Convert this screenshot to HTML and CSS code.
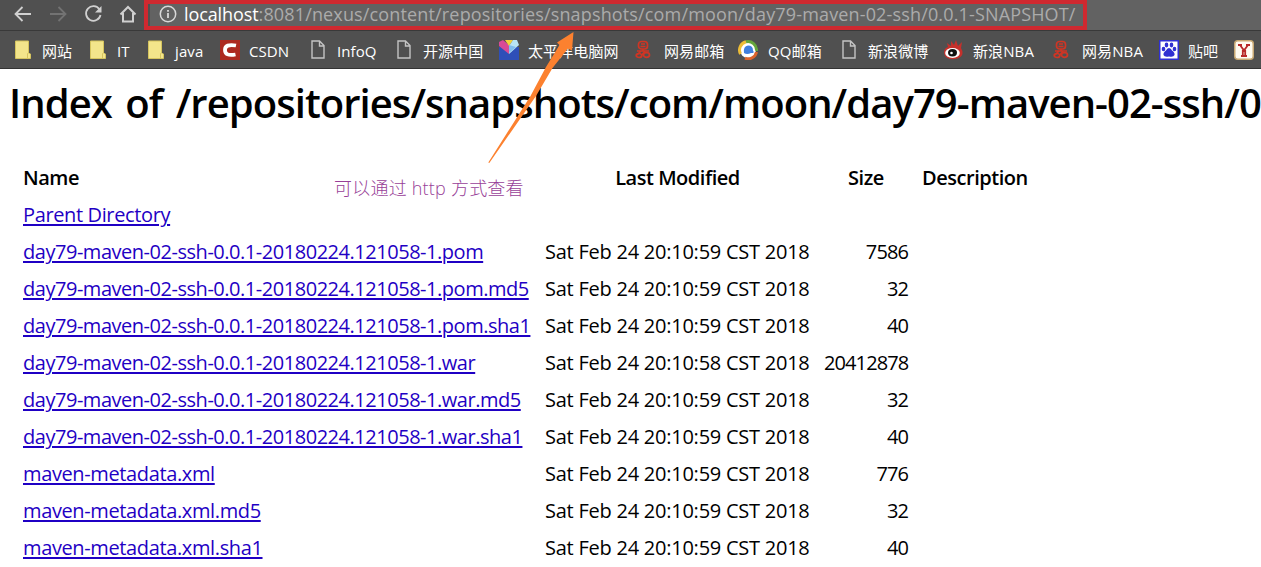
FILE: index.html
```html
<!DOCTYPE html>
<html lang="zh-CN">
<head>
<meta charset="utf-8">
<title>Index of /repositories/snapshots</title>
<link rel="stylesheet" href="styles.css">
</head>
<body>
<svg class="defs" width="0" height="0" aria-hidden="true">
  <symbol id="folder" viewBox="0 0 16 19"><path d="M.5 1h13v12l2 1v4.500H.5z" fill="#f3e58b" stroke="#d5c45e"/><path d="M12.500 18v-4.500l1-1" fill="none" stroke="#d5c45e"/></symbol>
  <symbol id="page" viewBox="0 0 14 19"><path d="M1 1h7.500L13 5.500V18H1zM8.500 1v5H13" fill="none" stroke="#c4c4c4" stroke-width="1.400"/></symbol>
  <symbol id="netease" viewBox="0 0 16 19"><g fill="none" stroke="#cf3524" stroke-width="1.700"><rect x="3.500" y="1.500" width="9" height="7.500" rx="3"/><path d="M6 4h4M5.500 6.500h5M8 9v2M2 11h12M6 11l-4 4M10 11l-3 4"/><ellipse cx="4" cy="15.500" rx="2.800" ry="2"/><ellipse cx="11.500" cy="15" rx="3" ry="2.300"/></g></symbol>
</svg>
<header class="chrome">
  <div class="toolbar">
    <svg class="nav" viewBox="0 0 140 30" width="140" height="30" fill="none" stroke="#d0d0d0" stroke-width="1.800">
      <path d="M31 14H16M22.500 7l-7 7 7 7"/>
      <path d="M50 14h15M58.500 7l7 7-7 7" stroke="#737373"/>
      <path d="M99.500 9.500A7.300 7.300 0 1 0 100.500 15"/><path d="M101.500 6v6.500H95z" fill="#d0d0d0" stroke="none"/>
      <path d="M120.500 14.500L128 7l7.500 7.500M123 13v8.500h10V13" stroke-width="2"/>
    </svg>
    <div class="address">
      <svg class="info" viewBox="0 0 18 18" width="18" height="18"><circle cx="9" cy="9" r="7.700" fill="none" stroke="#d8d8d8" stroke-width="1.500"/><path d="M9 8v5M9 5v1.800" stroke="#d8d8d8" stroke-width="1.800"/></svg>
      <span class="url"><span class="host">localhost</span>:8081/nexus/content/repositories/snapshots/com/moon/day79-maven-02-ssh/0.0.1-SNAPSHOT/</span>
    </div>
    <div class="highlight"></div>
  </div>
  <nav class="bookmarks">
    <a class="mark folder"><svg width="16" height="19"><use href="#folder"/></svg><span>网站</span></a>
    <a class="mark folder"><svg width="16" height="19"><use href="#folder"/></svg><span>IT</span></a>
    <a class="mark folder"><svg width="16" height="19"><use href="#folder"/></svg><span>java</span></a>
    <a class="mark site"><svg width="20" height="20" viewBox="0 0 20 20"><path d="M0 0h20v20H0z" fill="#ad291f"/><path d="M16 5.500Q5 3.500 5 10t10.500 4.500" fill="none" stroke="#fff" stroke-width="3.800"/></svg><span>CSDN</span></a>
    <a class="mark page"><svg width="14" height="19"><use href="#page"/></svg><span>InfoQ</span></a>
    <a class="mark page"><svg width="14" height="19"><use href="#page"/></svg><span>开源中国</span></a>
    <a class="mark site"><svg width="20" height="20" viewBox="0 0 20 20"><path d="M0 7h20v13H0z" fill="#2e4fb8"/><path d="M0 2l4-2 6 5v9L0 6z" fill="#d94a96"/><path d="M6 0h8l-4 6z" fill="#f3d23b"/><path d="M14 0h4l2 5-10 9V6z" fill="#b8e4f5"/><path d="M10 5l7 2-7 6z" fill="#80bdee"/></svg><span>太平洋电脑网</span></a>
    <a class="mark site"><svg width="16" height="19"><use href="#netease"/></svg><span>网易邮箱</span></a>
    <a class="mark site wide"><svg width="20" height="20" viewBox="0 0 20 20"><circle cx="10" cy="10" r="8" fill="#fff"/><g fill="none" stroke-width="3"><path d="M2.500 14A8.500 8.500 0 0 1 8 1.800" stroke="#edbd37"/><path d="M8 1.800a8.500 8.500 0 0 1 10.500 9" stroke="#65a63b"/><path d="M18.500 12A8.500 8.500 0 0 1 7 18.200" stroke="#dc642c"/></g><path d="M6 13q-1-7 4-7.500 5 0 5 5 2 3-2 2.500-4 2-7 0" fill="#407fdd"/></svg><span>QQ邮箱</span></a>
    <a class="mark page"><svg width="14" height="19"><use href="#page"/></svg><span>新浪微博</span></a>
    <a class="mark site"><svg width="20" height="20" viewBox="0 0 20 20"><path d="M4 7L3 3l4 3V1l3 4 2-5 2 6 4-4-1 6q5 9-6 11Q1 20 0 13 0 8 4 7" fill="#c5302b"/><ellipse cx="8.500" cy="13" rx="7.300" ry="5" fill="#fff"/><ellipse cx="8.500" cy="12.800" rx="4.500" ry="3.700" fill="#111"/><circle cx="7.500" cy="13" r="1.300" fill="#fff"/></svg><span>新浪NBA</span></a>
    <a class="mark site"><svg width="16" height="19"><use href="#netease"/></svg><span>网易NBA</span></a>
    <a class="mark site"><svg width="20" height="20" viewBox="0 0 20 20"><path d="M.75.750h18.500v18.500H.75z" fill="#fff" stroke="#3030d2" stroke-width="1.500"/><g fill="#3030d2"><ellipse cx="7.500" cy="5" rx="1.800" ry="2.400"/><ellipse cx="12.500" cy="5" rx="1.800" ry="2.400"/><ellipse cx="4.500" cy="9" rx="1.800" ry="2.200"/><ellipse cx="15.500" cy="9" rx="1.800" ry="2.200"/><path d="M10 8q2 0 3 2.500 3 2 2.500 4.500-1 2.500-5.500 1.500-4.500 1-5.500-1.500Q4 12.500 7 10.500 8 8 10 8"/></g></svg><span>贴吧</span></a>
    <a class="mark site"><svg width="20" height="20" viewBox="0 0 20 20"><rect x=".75" y=".75" width="18.500" height="18.500" rx="3" fill="#fffaf0" stroke="#c8a873" stroke-width="1.500"/><path d="M4 5h4M12 5h4M6 5l4 5.500L14 5M8.800 8v8M11.200 8v8M7 16h6" fill="none" stroke="#b82828" stroke-width="1.800"/></svg></a>
  </nav>
</header>
<main class="listing">
  <h1>Index of /repositories/snapshots/com/moon/day79-maven-02-ssh/0</h1>
  <table>
    <colgroup><col class="c-name"><col class="c-date"><col class="c-size"><col class="c-desc"></colgroup>
    <tr><th class="left">Name</th><th>Last Modified</th><th>Size</th><th class="left">Description</th></tr>
    <tr><td><a class="meta" href="#">Parent Directory</a></td><td></td><td></td><td></td></tr>
    <tr><td><a href="#">day79-maven-02-ssh-0.0.1-20180224.121058-1.pom</a></td><td class="date">Sat Feb 24 20:10:59 CST 2018</td><td class="size">7586</td><td></td></tr>
    <tr><td><a href="#">day79-maven-02-ssh-0.0.1-20180224.121058-1.pom.md5</a></td><td class="date">Sat Feb 24 20:10:59 CST 2018</td><td class="size">32</td><td></td></tr>
    <tr><td><a href="#">day79-maven-02-ssh-0.0.1-20180224.121058-1.pom.sha1</a></td><td class="date">Sat Feb 24 20:10:59 CST 2018</td><td class="size">40</td><td></td></tr>
    <tr><td><a href="#">day79-maven-02-ssh-0.0.1-20180224.121058-1.war</a></td><td class="date">Sat Feb 24 20:10:58 CST 2018</td><td class="size">20412878</td><td></td></tr>
    <tr><td><a href="#">day79-maven-02-ssh-0.0.1-20180224.121058-1.war.md5</a></td><td class="date">Sat Feb 24 20:10:59 CST 2018</td><td class="size">32</td><td></td></tr>
    <tr><td><a href="#">day79-maven-02-ssh-0.0.1-20180224.121058-1.war.sha1</a></td><td class="date">Sat Feb 24 20:10:59 CST 2018</td><td class="size">40</td><td></td></tr>
    <tr><td><a class="meta" href="#">maven-metadata.xml</a></td><td class="date">Sat Feb 24 20:10:59 CST 2018</td><td class="size">776</td><td></td></tr>
    <tr><td><a class="meta" href="#">maven-metadata.xml.md5</a></td><td class="date">Sat Feb 24 20:10:59 CST 2018</td><td class="size">32</td><td></td></tr>
    <tr><td><a class="meta" href="#">maven-metadata.xml.sha1</a></td><td class="date">Sat Feb 24 20:10:59 CST 2018</td><td class="size">40</td><td></td></tr>
  </table>
</main>
<p class="note">可以通过 http 方式查看</p>
<svg class="arrow" viewBox="0 0 90 134" width="90" height="134"><path d="M2.300 132.500L44.500 66 60 37 73.500 15 71 12.500 87.500 2 86 20.500 82 18.500 66.500 38 50 66 3.300 133z" fill="#fc812f"/></svg>
</body>
</html>
```

FILE: styles.css
```css
* { box-sizing: border-box; }
body {
  margin: 0;
  width: 1261px;
  height: 567px;
  position: relative;
  overflow: hidden;
  background: #fff;
  color: #000;
  font-family: "Open Sans", "Noto Sans CJK SC", sans-serif;
}
.defs { position: absolute; }
.chrome { height: 69px; background: #505050; border-bottom: 1px solid #333; }
.toolbar { position: relative; display: flex; height: 31px; border-bottom: 1px solid #393939; }
.nav { flex: none; margin-right: 10px; }
.address { flex: 1; display: flex; align-items: center; background: #626262; padding: 0 0 3px 9px; }
.info { flex: none; margin-right: 7px; }
.url { font-size: 18px; line-height: 26px; white-space: nowrap; color: #ababab; letter-spacing: 0.15px; }
.host { color: #fff; letter-spacing: -0.1px; }
.highlight { position: absolute; left: 144px; top: 0; width: 943px; height: 30px; border: 4px solid #cf2930; }
.bookmarks {
  display: grid;
  grid-template-columns: 75px 58px 72px 91px 86px 102px 136px 103px 104px 102px 109px 106px 75px 27px;
  height: 37px;
  padding-left: 15px;
  align-items: center;
}
.mark { display: flex; align-items: center; color: #fff; font-size: 15px; line-height: 22px; letter-spacing: 0.1px; white-space: nowrap; }
.mark svg { flex: none; }
.mark span { padding-top: 2px; }
.folder span { margin-left: 11px; }
.page span { margin-left: 12px; }
.site span { margin-left: 9px; }
.site svg[width="16"] + span { margin-left: 13px; }
.wide span { margin-left: 10px; }

h1 {
  margin: 0;
  padding-left: 9px;
  height: 91px;
  font-size: 40px;
  font-weight: 600;
  line-height: 68px;
  letter-spacing: -0.95px;
  word-spacing: 4px;
  white-space: nowrap;
  overflow: hidden;
}
table { margin-left: 16px; table-layout: fixed; width: 1030px; border-collapse: collapse; font-size: 20px; line-height: 27px; }
tr { height: 37px; }
th, td { padding: 0 7px 2px; white-space: nowrap; letter-spacing: -0.47px; }
th { font-weight: 600; }
.left { text-align: left; }
.c-name { width: 522px; }
.c-date { width: 279px; }
.c-size { width: 98px; }
.size { text-align: right; letter-spacing: -0.9px; }
.date { letter-spacing: -0.24px; }
td a { color: #1f00c4; text-decoration: underline; text-decoration-thickness: 2px; text-underline-offset: 2px; }
.meta { letter-spacing: -0.37px; }
.note { position: absolute; left: 334px; top: 175px; margin: 0; font-size: 18px; font-weight: 300; line-height: 26px; letter-spacing: 0.22px; color: #983f98; white-space: nowrap; }
.arrow { position: absolute; left: 486px; top: 30px; }
```
